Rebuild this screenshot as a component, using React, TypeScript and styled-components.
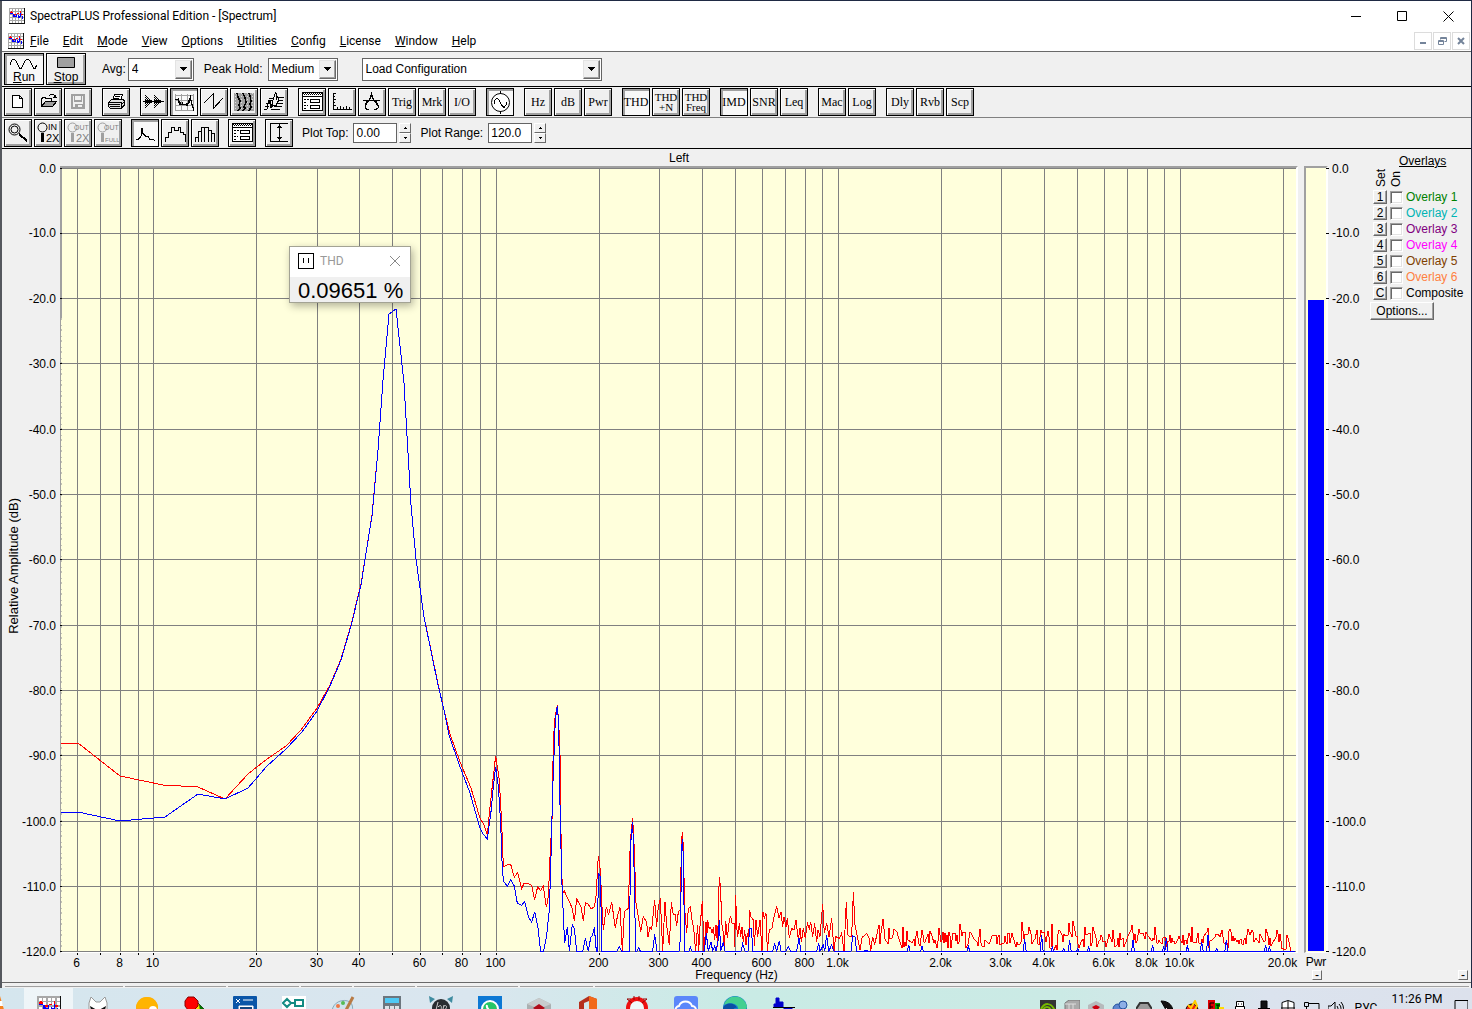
import React from "react";
import styled, { createGlobalStyle, css } from "styled-components";

const SANS = '"Liberation Sans", Arial, sans-serif';
const UI = 'Roboto, "Open Sans", sans-serif';
const SERIF = '"Liberation Serif", "Times New Roman", serif';

const GlobalStyle = createGlobalStyle`
  *, *::before, *::after { box-sizing: border-box; }
  body { margin: 0; background: #f0f0f0; font: 12px/14px ${SANS}; color: #000; }
  button, input, select { font: inherit; color: inherit; margin: 0; border-radius: 0; }
  button { padding: 0; }
  svg { display: block; flex: none; }
`;

/* ---------- window frame ---------- */

const Screen = styled.div`
  height: 100vh;
  display: flex;
  flex-direction: column;
  overflow: hidden;
`;

const AppWindow = styled.main`
  flex: 1;
  min-height: 0;
  display: flex;
  flex-direction: column;
  background: #f0f0f0;
  border: solid #1f2a44;
  border-width: 1px 1px 0 0;
  box-shadow: inset 2px 0 #55585e;
  padding-left: 2px;
`;

const TitleBar = styled.header`
  display: flex;
  align-items: center;
  height: 30px;
  padding-left: 7px;
  background: #fff;
  font: 12px/16px ${UI};
`;

const TitleText = styled.h1`
  flex: 1;
  margin: 0 0 0 5px;
  font: inherit;
`;

const CaptionButton = styled.button`
  display: grid;
  place-items: center;
  width: 46px;
  height: 29px;
  border: 0;
  background: transparent;
`;

const MenuBar = styled.nav`
  display: flex;
  align-items: center;
  height: 20px;
  padding-left: 6px;
  background: #fff;
  font: 12px/16px ${UI};
`;

const MenuList = styled.div`
  flex: 1;
  display: flex;
  gap: 14px;
  margin-left: 6px;
`;

const MenuItem = styled.button`
  border: 0;
  background: transparent;
  &::first-letter { text-decoration: underline; }
`;

const ChildButton = styled.button`
  display: grid;
  place-items: center;
  width: 18px;
  height: 18px;
  margin-right: 1px;
  border: 1px solid #dcdcdc;
  background: #fff;
`;

/* ---------- toolbars ---------- */

const ToolRow = styled.div<{ $height: number; $line: string }>`
  display: flex;
  align-items: center;
  height: ${(p) => p.$height}px;
  padding-left: 2px;
  border-top: 1px solid ${(p) => p.$line};
`;

const Group = styled.div<{ $end?: number }>`
  display: flex;
  gap: 2px;
  margin-right: ${(p) => p.$end ?? 10}px;
`;

const raised = css`
  background: #f0f0f0;
  box-shadow: inset 1px 1px #fff, inset -2px -2px #a0a0a0;
`;
const pressedFace = css`
  background: #f8f8f8;
  box-shadow: inset 2px 2px #a0a0a0;
`;

const ToolButton = styled.button<{ $pressed?: boolean; $small?: boolean }>`
  display: flex;
  flex-direction: column;
  align-items: center;
  justify-content: center;
  width: 28px;
  height: 28px;
  border: 1px solid #000;
  overflow: hidden;
  white-space: nowrap;
  font: ${(p) => (p.$small ? "11px/10px" : "12px/14px")} ${SERIF};
  ${(p) => (p.$pressed ? pressedFace : raised)}
  &:disabled { color: #a0a0a0; }
`;

const RunButton = styled(ToolButton)`
  justify-content: flex-end;
  width: 40px;
  height: 32px;
  font: 12px/14px ${SANS};
  span::first-letter { text-decoration: underline; }
`;

const FieldLabel = styled.label<{ $gap?: number }>`
  margin-right: ${(p) => p.$gap ?? 5}px;
`;

const Combo = styled.div<{ $width: number; $end: number }>`
  position: relative;
  width: ${(p) => p.$width}px;
  height: 23px;
  margin-right: ${(p) => p.$end}px;
  border: 1px solid #646464;
  background: #fff;
  select {
    width: 100%;
    height: 21px;
    padding: 0 18px 0 3px;
    border: 0;
    appearance: none;
    background: transparent;
  }
`;

const ComboArrow = styled.span`
  position: absolute;
  top: 1px;
  right: 1px;
  display: grid;
  place-items: center;
  width: 17px;
  height: 19px;
  border: 1px solid;
  border-color: #e3e3e3 #696969 #696969 #e3e3e3;
  background: #f0f0f0;
  box-shadow: inset -1px -1px #a0a0a0;
  pointer-events: none;
`;

const NumberBox = styled.input`
  width: 44px;
  height: 20px;
  margin-right: 2px;
  padding: 0 2px;
  border: 1px solid #646464;
  background: #fff;
`;

const Spinner = styled.div`
  display: grid;
  grid-template-rows: 10px 10px;
  width: 12px;
  margin-right: 9px;
`;

const SpinButton = styled.button`
  display: grid;
  place-items: center;
  border: 1px solid;
  border-color: #fff #696969 #696969 #fff;
  background: #f0f0f0;
`;

/* ---------- spectrum view ---------- */

const View = styled.section`
  flex: 1;
  min-height: 0;
  display: grid;
  grid-template-columns: 22px 36px minmax(0, 1fr) 6px 24px 40px 103px;
  grid-template-rows: 17px minmax(0, 1fr) 16px 13px;
  border-top: 1px solid #000;
`;

const PlotTitle = styled.h2`
  grid-area: 1 / 3;
  margin: 0;
  text-align: center;
  font: 12px/18px ${SANS};
`;

const AmplitudeTitle = styled.div`
  grid-area: 1 / 1 / 5 / 2;
  place-self: center;
  padding-right: 1px;
  writing-mode: vertical-lr;
  transform: rotate(180deg);
  white-space: nowrap;
  font-size: 13px;
`;

const AxisCell = styled.div<{ $column: number }>`
  grid-area: 2 / ${(p) => p.$column};
  padding: 2px 0 1px;
  min-height: 0;
  z-index: 1;
  svg { width: 100%; height: 100%; overflow: visible; }
`;

const FrequencyCell = styled.div`
  grid-area: 3 / 3;
  padding: 0 2px 0 1px;
  svg { width: 100%; height: 16px; overflow: visible; }
`;

const PlotBox = styled.div`
  grid-area: 2 / 3;
  position: relative;
  min-height: 0;
  border: solid;
  border-width: 2px 2px 1px 1px;
  border-color: #a0a0a0 #fff #fff #a0a0a0;
  background: #ffffdc;
  > svg { width: 100%; height: 100%; }
`;

const PowerBox = styled.div`
  grid-area: 2 / 5;
  display: flex;
  align-items: flex-end;
  padding: 0 2px 1px;
  border: solid;
  border-width: 2px 2px 1px 2px;
  border-color: #a0a0a0 #fff #fff #a0a0a0;
  background: #ffffdc;
`;

const PowerBar = styled.div`
  width: 100%;
  background: #0000ff;
`;

const PowerCaption = styled.div`
  grid-area: 3 / 5;
  justify-self: center;
  line-height: 19px;
`;

const BottomRow = styled.div`
  grid-area: 4 / 1 / 5 / -1;
  display: grid;
  grid-template-columns: 1fr auto 1fr;
  line-height: 12px;
`;

const CollapseGroup = styled.div`
  display: flex;
  justify-content: flex-end;
  gap: 136px;
  padding: 1px 3px 0 0;
`;

const CollapseButton = styled.button`
  width: 10px;
  height: 10px;
  border: 1px solid;
  border-color: #fff #696969 #696969 #fff;
  background: #f0f0f0;
  line-height: 7px;
`;

/* ---------- THD readout ---------- */

const Readout = styled.section`
  position: absolute;
  left: 228px;
  top: 78px;
  width: 122px;
  border: 1px solid #a3a394;
  background: #f0f0f0;
  box-shadow: 2px 3px 8px rgba(0, 0, 0, 0.3);
`;

const ReadoutBar = styled.header`
  display: flex;
  align-items: center;
  height: 30px;
  padding: 0 9px 2px 8px;
  gap: 6px;
  background: #fff;
  color: #999;
  font: 12px/16px ${UI};
  span { flex: 1; }
  button { border: 0; background: transparent; }
`;

const ReadoutValue = styled.output`
  display: block;
  padding: 2px 0 0 8px;
  font: 22px/23px ${SANS};
  white-space: nowrap;
`;

/* ---------- overlays ---------- */

const Overlays = styled.aside`
  grid-area: 1 / 7 / 3 / 8;
  padding: 5px 0 0 5px;
`;

const OverlaysTitle = styled.h2`
  margin: 0 0 0 26px;
  font: 12px/14px ${SANS};
  text-decoration: underline;
`;

const ColumnHeads = styled.div`
  display: flex;
  align-items: flex-end;
  gap: 1px;
  height: 20px;
  padding: 0 0 1px 1px;
  span { writing-mode: vertical-rl; transform: rotate(180deg); line-height: 14px; }
`;

const OverlayRow = styled.div<{ $color: string }>`
  display: grid;
  grid-template-columns: 14px 13px auto;
  justify-content: start;
  align-items: center;
  column-gap: 3px;
  height: 16px;
  label { color: ${(p) => p.$color}; line-height: 18px; white-space: nowrap; }
`;

const SetButton = styled.button`
  width: 14px;
  height: 14px;
  border: 1px solid;
  border-color: #fff #696969 #696969 #fff;
  background: #f0f0f0;
  box-shadow: inset -1px -1px #a0a0a0;
  line-height: 11px;
`;

const Tick = styled.input`
  appearance: none;
  width: 13px;
  height: 13px;
  border: 1px solid;
  border-color: #a0a0a0 #fff #fff #a0a0a0;
  background: #fff;
  box-shadow: inset 1px 1px #696969, inset -1px -1px #e3e3e3;
`;

const OptionsButton = styled.button`
  width: 64px;
  height: 18px;
  margin: 2px 0 0 -3px;
  border: 1px solid;
  border-color: #fff #696969 #696969 #fff;
  background: #f0f0f0;
  box-shadow: inset -1px -1px #a0a0a0;
`;

/* ---------- status bar and task bar ---------- */

const StatusBar = styled.footer`
  display: flex;
  gap: 2px;
  height: 6px;
  padding: 3px 2px 0 3px;
  border-top: 1px solid #696969;
`;

const StatusPane = styled.div<{ $width?: number }>`
  flex: ${(p) => (p.$width ? `0 0 ${p.$width}px` : "1")};
  height: 1px;
  background: #a0a0a0;
`;

const TaskBar = styled.nav`
  flex: 0 0 21px;
  overflow: hidden;
  background: linear-gradient(90deg, #d5e6ee 0%, #dae6ef 32%, #c9ebe5 50%, #cbeae5 72%, #dbe3ee 86%, #dce1ec 100%);
`;

const TaskBarInner = styled.div`
  display: flex;
  align-items: center;
  height: 40px;
`;

const TaskButton = styled.button<{ $active?: boolean; $width?: number }>`
  display: grid;
  place-items: center;
  flex: 0 0 ${(p) => p.$width ?? 49}px;
  height: 40px;
  border: 0;
  background: ${(p) => (p.$active ? "rgba(255,255,255,0.6)" : "transparent")};
  font: 12px/16px ${UI};
`;

const Tray = styled.div`
  display: flex;
  align-items: center;
  margin-left: auto;
`;

const Clock = styled.time`
  align-self: flex-start;
  width: 64px;
  padding: 3px 0 0 2px;
  text-align: center;
  font: 12px/16px ${UI};
`;

/* ---------- small drawings ---------- */

type Kids = { children: React.ReactNode };

/** Line drawing laid over the whole 28px face of a tool button. */
const Face = ({ children, color = "#000" }: Kids & { color?: string }) => (
  <svg width="28" height="28" viewBox="0 0 28 28" fill="none" stroke={color} shapeRendering="crispEdges" aria-hidden>
    {children}
  </svg>
);

const AppIcon = ({ size = 16 }: { size?: number }) => (
  <svg width={size} height={size} viewBox="0 0 16 16" fill="none" shapeRendering="crispEdges" aria-hidden>
    <rect width="16" height="16" fill="#fff" />
    <path d="M.5 0v15M3.5 0v15M6.5 0v15M9.5 0v15M12.5 0v15M0 .5h15M0 3.5h15M0 6.5h15M0 9.5h15M0 12.5h15" stroke="#a8a8a8" />
    <path d="M0 15.5h16M15.5 0v16" stroke="#111" />
    <path d="M1 4.500h3M5 6.500h2M8 5.500h2M11.500 3v3M12 6.500h2M2 3.500h1" stroke="#f00" />
    <path d="M1 5.500h3M4.500 6v3M6 8.500h2M7.500 6v3M9.500 7v3M11.500 5v4M13.500 8v3M10.500 8v2M5.500 7v2" stroke="#00f" />
  </svg>
);

const Down = () => (
  <svg width="7" height="4" viewBox="0 0 7 4" shapeRendering="crispEdges" aria-hidden>
    <path d="M0 0h7v1H6v1H5v1H4v1H3V3H2V2H1V1H0z" />
  </svg>
);

const SpinArrow = ({ up }: { up?: boolean }) => (
  <svg width="3" height="2" viewBox="0 0 3 2" shapeRendering="crispEdges" aria-hidden>
    <path d={up ? "M1 0h1v1h1v1H0V1h1z" : "M0 0h3v1H2v1H1V1H0z"} />
  </svg>
);

const icons = {
  file: <Face><path d="M8.5 7.5h7l3 3v9h-10zM15.5 7.5v3h3" fill="#fff" /></Face>,
  open: (
    <Face>
      <path d="M7.5 18.5v-8h1v-1h3v1h6v3" /><path d="M7.5 18.5l4-5h11l-4 5z" fill="#a0a0a0" />
      <path d="M14.5 8.5l2-2h3l2 3M19 9.5h4M21.5 7v3" />
    </Face>
  ),
  save: (
    <Face color="#a0a0a0">
      <path d="M8 7h12v13H8z" strokeWidth="2" /><path d="M10.5 7v6h7V7M10 12.5h8M11 16.500h7v4h-7z" /><path d="M13 17v3" strokeWidth="2" />
    </Face>
  ),
  print: (
    <Face>
      <path d="M10.5 12.5l2-6h8l-2 6" fill="#fff" /><path d="M13 8.5h5M12 10.5h5" />
      <path d="M6.5 14.5l3-3h11l2 1v5l-4 3h-10l-2-2z" fill="#ddd" />
      <path d="M7 14.5h12v5M7 16.5h11M8 18.5h10M19 17l3-3" /><path d="M10 20.500h9l3-3" />
    </Face>
  ),
  time: (
    <Face>
      <path d="M3 13.500h21" />
      <path d="M5.500 7v1M5.500 9v1M5.500 11v5M5.500 17v1M5.500 19v1M7.500 9v1M7.500 11v5M7.500 17v1M9.500 11v5M11.500 12v3M6.500 8v1M6.500 10v1M6.500 12v3M6.500 16v1M6.500 18v1M8.500 10v1M8.500 12v3M8.500 16v1M10.500 12v3" />
      <path d="M14.500 7v1M14.500 9v1M14.500 11v5M14.500 17v1M14.500 19v1M16.500 9v1M16.500 11v5M16.500 17v1M18.500 11v5M20.500 12v3M15.500 8v1M15.500 10v1M15.500 12v3M15.500 16v1M15.500 18v1M17.500 10v1M17.500 12v3M17.500 16v1M19.500 12v3" />
    </Face>
  ),
  spectrum: (
    <Face>
      <path d="M5.5 6v17M11.5 6v17M17.5 6v17M23.5 6v17M5 7.5h19M5 12.5h19M5 17.5h19M5 22.5h19" stroke="#a0a0a0" />
      <path d="M5 11.500h3M8.500 10v5M9.500 13v4M10 16.500h2M12.500 14v3M13 16.500h4M17.500 15v3M18.500 12v4M20.500 7v6M19.500 10v5M21.500 12v5M22.500 16v4M23.500 19v4M10.500 14v2M16.500 15v3" />
    </Face>
  ),
  phase: <Face><path d="M4 15l9-9v15l10-11" /></Face>,
  spectrogram: (
    <Face>
      <rect x="4" y="5" width="20" height="18" fill="#a0a0a0" stroke="none" />
      <path d="M5.5 5v18M11.5 5v18M17.5 5v18M22.5 5v18" stroke="#ddd" strokeDasharray="1 2" />
      <path d="M7 5l1 4 2 4-1 4 1 3-2 3M13 5l2 5 1 4-2 5 1 1-2 3M19 5l1 3 1 5-1 3 1 3-2 4" strokeWidth="1.5" />
    </Face>
  ),
  surface: (
    <Face>
      <path d="M9 10.500h5M18 9.500h6M8 12.500h5M18 12.500h5M6 15.500h5M17 15.500h6M5 18.500h4M14 18.500h8M4 21.500h3M11 21.500h9" />
      <path d="M7 20.500v-4l2-3 2 3v3M12.500 19v-6l3-8 2 4h2M12 17.500h4l2-4v-4" />
      <path d="M16.500 5v7M10.500 13v7" />
    </Face>
  ),
  settings: (
    <Face>
      <path d="M4.5 4.5h20v18h-20z" fill="#fff" /><path d="M5 5.500h19M6 6.500h18" strokeDasharray="1 1" /><path d="M5 8.5h19" />
      <path d="M12.5 11.5h9v3h-9zM12.5 17.5h9v3h-9z" /><path d="M6 11.5h5M6 14.5h3M6 17.5h4M6 20.5h3" strokeDasharray="2 1" />
    </Face>
  ),
  ruler: <Face><path d="M5.5 5v16.500h18M5 5.500h3M5 8.500h2M5 11.500h3M5 14.500h2M5 17.500h3M9.500 21v-2M12.500 21v-3M15.500 21v-2M18.500 21v-3M21.500 21v-2" /></Face>,
  compass: (
    <Face>
      <path d="M13.500 4v3M12 8.500h3M12 7.500h3M13 9l-6 9M14 9l6 9M5 12.500h17M9 13l-2 4v3l3 2 1-1M18 13l2 4v3l-3 2-1-1" />
    </Face>
  ),
  generator: (
    <Face>
      <circle cx="14.500" cy="14.500" r="9" fill="#fff" shapeRendering="auto" /><path d="M14.500 3v3M14.500 23v3M8.500 16v-3l2-3h1l2 3 2 4 2 2h1l2-3v-2" />
    </Face>
  ),
  zoom: (
    <Face>
      <circle cx="10.500" cy="10.500" r="5.500" shapeRendering="auto" /><circle cx="10.500" cy="10.500" r="3.500" shapeRendering="auto" />
      <path d="M15 15l8 7" strokeWidth="2" />
    </Face>
  ),
  vertical: (
    <Face><path d="M5.500 4v19M5 4.500h18M5 22.500h18M14.500 5v17M12 8.500h5M13 7.500h3M12 18.500h5M13 19.500h3" /></Face>
  ),
  line: <Face><path d="M5 20.500h2l3-3 1-8 1 5 3 3h2l2 3h3l2 1" /></Face>,
  outline: <Face><path d="M4.500 23v-5h3v-5h3V8h3v3h4v-3h2v5h3v2h2v8" /></Face>,
  bars: <Face><path d="M4.500 23v-5h3v5M7.500 19v-7h3v11M10.500 13V8h3v15M13.500 8h4v15M17.500 11h3v12M20.500 14h3v9" /></Face>,
};

const ZoomText = ({ top, bottom, off }: { top: string; bottom: string; off?: boolean }) => (
  <Face color={off ? "#a0a0a0" : "#000"}>
    <circle cx="8.500" cy="8.500" r="4.500" shapeRendering="auto" />
    <path d="M8.500 14v9" strokeWidth="3" />
    <g fill={off ? "#808080" : "#000"} stroke="none" fontFamily='"Liberation Sans", Arial, sans-serif'>
      <text x={top === "IN" ? 14 : 10} y="11" fontSize={top === "IN" ? 9 : 7}>{top}</text>
      <text x={bottom === "2X" ? 12 : 11} y="23" fontSize={bottom === "2X" ? 11 : 6}>{bottom}</text>
    </g>
  </Face>
);

/* ---------- measured data ---------- */

const PLOT_W = 1235;
const PLOT_H = 784;
const freqX = (hz: number) => Math.floor(92.7 + 342.3 * Math.log10(hz / 10)) + 0.5;
const levelY = (i: number) => Math.floor(i * 65.3) + 0.5;

const gridFrequencies = [
  6, 7, 8, 9, 10, 20, 30, 40, 50, 60, 70, 80, 90, 100, 200, 300, 400, 500, 600, 700, 800, 900, 1000,
  2000, 3000, 4000, 5000, 6000, 7000, 8000, 9000, 10000, 20000,
];
const frequencyLabels: [number, string][] = [
  [6, "6"], [8, "8"], [10, "10"], [20, "20"], [30, "30"], [40, "40"], [60, "60"], [80, "80"], [100, "100"],
  [200, "200"], [300, "300"], [400, "400"], [600, "600"], [800, "800"], [1000, "1.0k"], [2000, "2.0k"],
  [3000, "3.0k"], [4000, "4.0k"], [6000, "6.0k"], [8000, "8.0k"], [10000, "10.0k"], [20000, "20.0k"],
];
const levels = Array.from({ length: 13 }, (_, i) => (i === 0 ? "0.0" : `-${i * 10}.0`));

/* Low bins, in plot units. */
const redLow =
  "0,575 17,575 59,608 102,617 137,619 164,631 187,606 206,591 225,578 240,562 256,540 269,517 280,491 290,457 300,416 305,385 311,347 317,282 322,212 328,146 335,141 343,215 350,337 355,391 363,449 370,482 377,516 383,542 389,566 399,594 410,620";
const blueLow =
  "0,644 17,644 59,653 104,649 137,626 164,631 187,620 206,598 225,581 241,564 256,543 269,518 280,492 290,458 300,417 305,385 311,348 317,282 322,212 328,146 335,141 343,215 350,337 355,391 363,449 370,483 377,517 383,542 388,567 398,596 409,625";

/* Upper bins, three units to one plot unit, measured from the 419/522 corner. */
const redMid = [
  0,385,10,400,22,435,30,350,40,260,47,197,58,270,65,400,70,530,80,525,92,523,103,562,113,547,125,595,132,580,145,580,155,587,164,630,173,590,182,602,190,588,199,652,205,620,211,480,216,390,220,160,224,90,232,45,236,95,240,190,243,430,247,610,253,603,270,640,277,655,283,693,290,627,303,650,310,693,316,638,325,643,333,657,343,650,348,620,355,497,361,540,366,650,370,720,379,650,386,675,395,635,406,715,412,680,420,652,427,783,433,665,445,655,451,450,458,385,463,480,468,640,475,680,482,725,490,680,500,697,504,740,510,712,515,718,524,630,530,710,535,650,541,625,548,783,555,635,560,705,568,765,574,637,580,675,585,672,590,708,595,665,601,660,604,470,607,425,610,470,614,655,620,730,625,655,631,650,636,690,641,715,647,783,653,705,656,783,660,710,667,633,672,783,678,697,681,730,683,690,687,715,692,712,696,730,700,712,704,750,708,705,713,770,715,650,718,560,722,600,725,700,730,730,733,783,737,692,742,745,748,690,752,680,756,700,762,700,764,770,767,615,770,710,773,740,778,700,782,740,786,710,790,757,794,720,798,765,802,730,806,750,809,660,813,680,820,690,823,767,828,690,833,740,840,690,846,783,849,665,853,685,858,670,862,783,868,720,876,715,880,690,890,648,897,685,903,665,908,710,912,680,918,712,922,685,928,745,935,715,942,720,948,690,955,750,960,715,964,757,970,715,976,745,982,700,988,715,992,695,998,740,1004,700,1010,755,1014,720,1020,740,1028,643,1033,730,1040,700,1047,740,1055,685,1062,783,1067,740,1078,745,1085,730,1092,783,1099,635,1103,735,1110,740,1115,740,1120,607,1125,705,1132,740,1140,780,1147,740,1153,738,1160,730,1168,745,1172,783,1178,740,1184,765,1195,712,
];
const blueMid = [
  0,415,10,433,22,447,33,365,40,290,47,230,55,290,62,400,67,540,71,575,82,588,92,570,103,588,112,640,125,646,134,635,145,680,155,697,164,665,174,715,182,784,191,784,200,735,208,660,212,540,218,300,223,170,226,90,232,47,236,100,239,300,245,560,251,700,254,760,262,710,268,784,277,703,283,715,290,784,308,784,316,745,325,784,332,743,338,735,343,712,349,784,352,784,355,550,361,560,366,784,411,784,418,770,425,784,448,784,452,460,458,395,462,530,467,784,470,784,476,772,481,784,518,784,524,733,531,784,597,784,602,740,604,490,607,448,610,500,614,784,627,784,631,772,636,784,673,784,679,730,685,784,693,755,698,784,704,768,708,784,714,755,718,690,722,784,730,755,735,784,783,784,788,762,795,784,804,784,809,715,814,715,819,784,878,784,884,762,890,784,898,752,903,784,918,784,925,770,932,784,950,784,957,745,963,784,1010,784,1016,760,1020,784,1030,765,1034,784,1040,735,1046,784,1055,765,1062,784,1113,784,1118,738,1125,740,1130,784,1150,784,1158,780,1166,784,
];
const unpack = (values: number[]) => {
  let out = "";
  for (let i = 0; i < values.length; i += 2) out += ` ${419 + values[i] / 3},${522 + values[i + 1] / 3}`;
  return out;
};

/* Noise floor above 1.3 kHz with its stronger components. */
const redSpikes: Record<number, number> = {
  818: 757, 822: 751, 828: 760, 833: 761, 842: 759, 878: 760, 899: 756, 919: 761, 961: 754, 968: 759, 980: 762,
  991: 756, 1008: 755, 1012: 753, 1024: 759, 1032: 759, 1071: 757, 1131: 759, 1147: 760, 1161: 762, 1187: 761,
  1205: 761, 1216: 762,
};
const noiseFloor = () => {
  let seed = 4711;
  const random = () => {
    seed = (seed * 1103515245 + 12345) % 2147483648;
    return seed / 2147483648;
  };
  let out = "";
  let drift = 0;
  for (let x = 818; x <= 1228; x++) {
    drift = drift * 0.6 + (random() - 0.5) * 6;
    const spread = x < 910 ? 20 : 16;
    const y = redSpikes[x] ?? Math.min(782, 771 + drift + (random() - 0.5) * spread + (x > 1220 ? 5 : 0));
    if (redSpikes[x] || random() > 0.3) out += ` ${x},${Math.round(y)}`;
  }
  return out + " 1230,783";
};
const blueSpikes = [
  18,270,146,255,186,258,325,258,494,237,545,225,577,262,611,265,629,240,653,265,686,262,819,240,878,258,911,262,919,235,982,258,1025,245,1044,225,1070,265,1099,240,1217,258,1228,262,
];
const blueFloor = () => {
  let out = "";
  for (let i = 0; i < blueSpikes.length; i += 2) {
    const x = 799 + blueSpikes[i] / 3;
    out += ` ${x - 1.5},783.4 ${x},${692 + blueSpikes[i + 1] / 3} ${x + 1.5},783.4`;
  }
  return out + " 1234,783.4";
};

const redTrace = redLow + unpack(redMid) + noiseFloor();
const blueTrace = blueLow + unpack(blueMid) + blueFloor();

/* ---------- parts ---------- */

const SpectrumPlot = () => (
  <svg viewBox={`0 0 ${PLOT_W} ${PLOT_H}`} preserveAspectRatio="none" fill="none" shapeRendering="crispEdges" role="img" aria-label="Spectrum, left channel">
    <g stroke="#808080">
      {gridFrequencies.map((f) => <path key={f} d={`M${freqX(f)} 0V${PLOT_H}`} />)}
      {levels.map((l, i) => <path key={l} d={`M0 ${levelY(i)}H${PLOT_W}`} />)}
    </g>
    <path d="M.5 0V150" stroke="#a0a0a0" />
    <path d="M.5 150V784" stroke="#c4c4b4" strokeDasharray="2 5 1 3" />
    <polyline points={redTrace} stroke="#f00" />
    <polyline points={blueTrace} stroke="#00f" />
    <path d={`M${freqX(3000)} 783.5H1234`} stroke="#00f" />
  </svg>
);

const LevelAxis = ({ side }: { side: "left" | "right" }) => (
  <svg aria-hidden fontSize="12">
    {levels.map((l, i) => {
      const y = `${(levelY(i) / PLOT_H) * 100}%`;
      return (
        <g key={l}>
          <line x1={side === "left" ? 36 : -2} x2={side === "left" ? 38 : 1} y1={y} y2={y} stroke="#000" shapeRendering="crispEdges" />
          <text x={side === "left" ? 32 : 4} y={y} dy="4" textAnchor={side === "left" ? "end" : "start"}>{l}</text>
        </g>
      );
    })}
  </svg>
);

const FrequencyAxis = () => (
  <svg fontSize="12" aria-hidden>
    {gridFrequencies.map((f) => {
      const x = `${(freqX(f) / PLOT_W) * 100}%`;
      return <line key={f} x1={x} x2={x} y1="-1" y2="2" stroke="#000" shapeRendering="crispEdges" />;
    })}
    {frequencyLabels.map(([f, text]) => (
      <text key={f} x={`${(freqX(f) / PLOT_W) * 100}%`} dx="-1" y="14" textAnchor="middle">{text}</text>
    ))}
  </svg>
);

const Select = ({ id, width, end, value }: { id: string; width: number; end: number; value: string }) => (
  <Combo $width={width} $end={end}>
    <select id={id} defaultValue={value} aria-label={id === "configuration" ? "Configuration" : undefined}>
      <option>{value}</option>
    </select>
    <ComboArrow><Down /></ComboArrow>
  </Combo>
);

const Stepper = ({ name }: { name: string }) => (
  <Spinner>
    <SpinButton aria-label={`Increase ${name}`}><SpinArrow up /></SpinButton>
    <SpinButton aria-label={`Decrease ${name}`}><SpinArrow /></SpinButton>
  </Spinner>
);

type Tool = { icon?: keyof typeof icons; text?: string; name?: string; on?: boolean; off?: boolean };
const mainTools: Tool[][] = [
  [{ icon: "file", name: "New" }, { icon: "open", name: "Open" }, { icon: "save", name: "Save", off: true }],
  [{ icon: "print", name: "Print" }],
  [{ icon: "time", name: "Time series" }, { icon: "spectrum", name: "Spectrum", on: true }, { icon: "phase", name: "Phase" }, { icon: "spectrogram", name: "Spectrogram" }, { icon: "surface", name: "3-D surface" }],
  [{ icon: "settings", name: "Settings" }, { icon: "ruler", name: "Scaling" }, { icon: "compass", name: "Calibration" }, { text: "Trig" }, { text: "Mrk" }, { text: "I/O" }],
  [{ icon: "generator", name: "Signal generator", on: true }],
  [{ text: "Hz" }, { text: "dB" }, { text: "Pwr" }],
  [{ text: "THD", on: true }, { text: "THD +N" }, { text: "THD Freq" }],
  [{ text: "IMD", on: true }, { text: "SNR" }, { text: "Leq" }],
  [{ text: "Mac" }, { text: "Log" }],
  [{ text: "Dly" }, { text: "Rvb" }, { text: "Scp" }],
];

const ToolItem = ({ tool }: { tool: Tool }) => {
  const lines = tool.text?.split(" ") ?? [];
  return (
    <ToolButton $pressed={tool.on} $small={lines.length > 1} disabled={tool.off} aria-label={tool.name} aria-pressed={tool.on}>
      {tool.icon ? icons[tool.icon] : lines.map((l) => <span key={l}>{l}</span>)}
    </ToolButton>
  );
};

const overlays: [string, string, string][] = [
  ["1", "Overlay 1", "#008000"], ["2", "Overlay 2", "#00b4b4"], ["3", "Overlay 3", "#800080"], ["4", "Overlay 4", "#ff00ff"],
  ["5", "Overlay 5", "#804000"], ["6", "Overlay 6", "#ff8040"], ["C", "Composite", "#000"],
];

const Task = ({ children }: Kids) => <svg width="24" height="24" viewBox="0 0 24 24" aria-hidden>{children}</svg>;
const tasks: [string, React.ReactNode][] = [
  ["Spectrum analyser", <AppIcon size={24} />],
  ["Foobar", <Task><path d="M3 24V7l2-6 5 5h4l5-5 2 6v17z" fill="#fff" stroke="#999" /><path d="M4 10l7 4v5l-5-1zM20 10l-7 4v5l5-1z" fill="#111" /></Task>],
  ["Mail", <Task><circle cx="12" cy="12" r="11" fill="#ffa51a" /><path d="M1 12a11 11 0 0 1 22 0z" fill="#ffb400" /><circle cx="18" cy="14" r="4" fill="#fff" /></Task>],
  ["Shapes", <Task><path d="M11 4l10 10v8H9z" fill="#fd0" stroke="#333" /><path d="M15 8l6 6v8h-4z" fill="#070" /><path d="M4 1h6l4 4v5l-4 4H4L1 10V5z" fill="#f00" stroke="#800" /></Task>],
  ["Calculator pro", <Task><rect width="24" height="24" rx="1" fill="#0b56a8" /><path d="M3 3l4 4M7 3l-4 4" stroke="#fff" /><path d="M10 4h10M6 10h14v13H6z" fill="#fff" stroke="#fff" /><path d="M7 11h12v3H7z" fill="#124580" /></Task>],
  ["Circuit", <Task><rect width="24" height="24" fill="#fff" /><path d="M1 7l4-4 4 4-4 4zM9 7h4M13 4h8v6h-8zM4 16h8v6H4zM12 19h10" fill="none" stroke="#138b83" strokeWidth="2" /></Task>],
  ["Paint", <Task><path d="M1 15C2 6 12 2 19 6c5 4 3 15-7 17C5 24 1 21 1 15z" fill="#cfe3ee" stroke="#8ab" /><circle cx="7" cy="10" r="2" fill="#e74" /><circle cx="12" cy="7" r="2" fill="#5b5" /><circle cx="5" cy="15" r="2" fill="#48e" /><path d="M22 1l-8 15" stroke="#b87b45" strokeWidth="3" /></Task>],
  ["Calculator", <Task><rect x="3" width="18" height="24" fill="#6c767e" /><rect x="5" y="2" width="14" height="5" fill="#4fc9f4" /><path d="M5 10h4v4H5zM10 10h4v4h-4zM15 10h4v4h-4z" fill="#dce3e8" /></Task>],
  ["Printer assistant", <Task><circle cx="12" cy="12" r="9" fill="#292c30" /><path d="M0 0l6 3-5 4zM24 0l-6 3 5 4z" fill="#3f8ca0" /><path d="M9 6l-2 8M9 11c3-3 4-1 3 3M15 9l-2 8M15 10c4-2 3 4-1 4" stroke="#ccc" fill="none" /></Task>],
  ["WhatsApp", <Task><rect width="24" height="24" fill="#0c78d4" /><circle cx="12" cy="13" r="8" fill="#25c667" stroke="#fff" strokeWidth="2" /><path d="M9 9c-1 3 3 7 6 6" stroke="#fff" strokeWidth="2" fill="none" /></Task>],
  ["Cube", <Task><path d="M0 8l12-6 12 6v10l-12 5-12-5z" fill="#aab0b2" /><path d="M0 8l12-6 12 6-12 5z" fill="#c8cccd" /><path d="M6 12l6-4 6 4-6 4z" fill="#b00b18" /></Task>],
  ["Office", <Task><path d="M3 6l10-6 8 3v18l-8 3-10-4 10 1V5L8 7v11l-5 2z" fill="#b5301c" /><path d="M13 0l8 3v18l-8 3z" fill="#f26a1b" /></Task>],
  ["Ring", <Task><circle cx="12" cy="12" r="9" fill="#eefafa" stroke="#e11" strokeWidth="4" /><path d="M2 3l5 4M22 3l-5 4M9 0v4M14 0v4M2 3h4M18 3h4" stroke="#900" /></Task>],
  ["Cloud", <Task><rect width="24" height="24" rx="3" fill="#5b87fa" /><path d="M6 18a4 4 0 0 1-1-8 7 7 0 0 1 13 0 4 4 0 0 1 0 8" fill="none" stroke="#fff" strokeWidth="2" /></Task>],
  ["Edge", <Task><circle cx="12" cy="12" r="12" fill="#1680cf" /><path d="M1 9C4-2 20-3 24 10c0 5-8 7-9 3 1-5-8-8-14-4z" fill="#43cf90" /><path d="M0 12c2-6 12-6 14 0-4-1-6 4-3 8C5 20 0 18 0 12z" fill="#0c4fa5" /></Task>],
  ["Histogram", <Task><path d="M2 11V8h2V2h3v4h4v5zM12 12v3h8v-3" fill="#00c" stroke="#00c" /><path d="M1 11.500h22" stroke="#000" /></Task>],
];

const Mini = ({ children }: Kids) => <svg width="16" height="16" viewBox="0 0 16 16" fill="none" stroke="#000" aria-hidden>{children}</svg>;
const tray: [string, React.ReactNode][] = [
  ["Graphics", <Mini><rect width="16" height="16" fill="#333" stroke="none" /><path d="M1 9c4-7 10-6 13 0-4 5-8 5-11 1 2-4 6-4 8 0" stroke="#76b900" strokeWidth="2" /></Mini>],
  ["Storage", <Mini><path d="M1 3l4-3h11v14l-4 2H1z" fill="#aaa" stroke="#777" /><path d="M5 4v12M9 4v12M1 4h11" stroke="#ddd" /></Mini>],
  ["Cube agent", <Mini><path d="M0 5l8-4 8 4v8l-8 3-8-3z" fill="#b6babc" stroke="none" /><path d="M4 7l4-2 4 2-4 4z" fill="#c01" stroke="none" /></Mini>],
  ["Sync", <Mini><circle cx="6" cy="9" r="5" fill="#5f86cf" stroke="#24529e" /><circle cx="11" cy="5" r="4" fill="#8dafe6" stroke="#24529e" /></Mini>],
  ["Security", <Mini><path d="M0 9l4-6h8l4 6-3 7H3z" fill="#9a9a9a" stroke="#333" strokeWidth="2" /></Mini>],
  ["Feather", <Mini><path d="M1 1c8 0 13 5 12 14C9 14 6 12 5 8L1 1z" fill="#111" /><path d="M6 8l5 6" stroke="#fff" /></Mini>],
  ["Firewall", <Mini><circle cx="8" cy="10" r="6" fill="#e21" /><path d="M4 5l3 3 4-7 2 5-3 5 3 4" stroke="#fc0" strokeWidth="2" /></Mini>],
  ["Monitor", <Mini><path d="M0 0h7v14H0z" fill="#d00" stroke="none" /><path d="M7 3h5v11H7z" fill="#0a0" stroke="none" /><path d="M11 7h5v7h-5z" fill="#fd0" stroke="none" /><path d="M2 3h4M2 3v8M2 7h3M8 5h4M10 5v6" /></Mini>],
  ["USB", <Mini><path d="M4.500 1.500h7v5h-7zM3.500 6.500h9v9h-9z" fill="#fff" /><path d="M6 4h1M9 4h1" /></Mini>],
  ["Microphone", <Mini><path d="M5 1h6v8H5z" fill="#111" /><path d="M2 9h12M8 9v6" strokeWidth="2" /></Mini>],
  ["Defender", <Mini><path d="M8 .5l6 2v6c0 4-3 6-6 7-3-1-6-3-6-7v-6z" fill="#fff" /><path d="M8 1v14M1 8h14" /></Mini>],
  ["Network", <Mini><path d="M.5 2.500h4v4h-4zM4 3.500h11v9H5M2.500 6v8M7 15h6" /></Mini>],
  ["Volume", <Mini><path d="M0 6h3l4-4v12l-4-4H0zM9 6q2 2 0 5M11 4q4 4 0 9M13 2q5 6 0 13" /></Mini>],
];

export default function App() {
  return (
    <Screen>
      <GlobalStyle />
      <AppWindow>
        <TitleBar>
          <AppIcon />
          <TitleText>SpectraPLUS Professional Edition - [Spectrum]</TitleText>
          <CaptionButton aria-label="Minimize"><svg width="10" height="10"><path d="M0 5.500h10" stroke="#000" /></svg></CaptionButton>
          <CaptionButton aria-label="Maximize"><svg width="10" height="10"><path d="M.5.500h9v9h-9z" fill="none" stroke="#000" /></svg></CaptionButton>
          <CaptionButton aria-label="Close"><svg width="11" height="11"><path d="M.5.500l10 10M10.500.500l-10 10" stroke="#000" /></svg></CaptionButton>
        </TitleBar>
        <MenuBar aria-label="Menu">
          <AppIcon />
          <MenuList>
            {["File", "Edit", "Mode", "View", "Options", "Utilities", "Config", "License", "Window", "Help"].map((m) => (
              <MenuItem key={m}>{m}</MenuItem>
            ))}
          </MenuList>
          <ChildButton aria-label="Minimize child"><svg width="8" height="8"><path d="M1 6h6" stroke="#74849a" strokeWidth="2" /></svg></ChildButton>
          <ChildButton aria-label="Restore child"><svg width="9" height="9" fill="none" stroke="#74849a"><path d="M2.500 2.500v-2h6v4h-2M.5 3.500h5v4h-5zM.5 4.500h5M3 1.500h5" /></svg></ChildButton>
          <ChildButton aria-label="Close child"><svg width="8" height="8"><path d="M1 1l6 6M7 1l-6 6" stroke="#74849a" strokeWidth="2" /></svg></ChildButton>
        </MenuBar>

        <ToolRow $height={35} $line="#696969">
          <Group $end={16}>
            <RunButton $pressed>
              <svg width="30" height="13" viewBox="0 0 30 13" fill="none" stroke="#000" shapeRendering="crispEdges"><path d="M1.500 8v-2l2-4h2l2 3 3 6h2l3-6 2-3h2l2 3 3 6h2l1-3" /></svg>
              <span>Run</span>
            </RunButton>
            <RunButton>
              <svg width="18" height="13" viewBox="0 0 18 13"><path d="M.5.500h17v10H.5z" fill="#a0a0a0" stroke="#000" /></svg>
              <span>Stop</span>
            </RunButton>
          </Group>
          <FieldLabel htmlFor="avg" $gap={2}>Avg:</FieldLabel>
          <Select id="avg" width={66} end={10} value="4" />
          <FieldLabel htmlFor="hold">Peak Hold:</FieldLabel>
          <Select id="hold" width={70} end={24} value="Medium" />
          <Select id="configuration" width={240} end={0} value="Load Configuration" />
        </ToolRow>

        <ToolRow $height={31} $line="#000">
          {mainTools.map((group, i) => (
            <Group key={i}>{group.map((tool, j) => <ToolItem key={j} tool={tool} />)}</Group>
          ))}
        </ToolRow>

        <ToolRow $height={31} $line="#808080">
          <Group $end={9}>
            <ToolButton aria-label="Zoom">{icons.zoom}</ToolButton>
            <ToolButton aria-label="Zoom in 2X"><ZoomText top="IN" bottom="2X" /></ToolButton>
            <ToolButton aria-label="Zoom out 2X" disabled><ZoomText top="OUT" bottom="2X" off /></ToolButton>
            <ToolButton aria-label="Zoom out full" disabled><ZoomText top="OUT" bottom="FULL" off /></ToolButton>
          </Group>
          <Group $end={9}>
            <ToolButton $pressed aria-label="Line plot">{icons.line}</ToolButton>
            <ToolButton aria-label="Outline plot">{icons.outline}</ToolButton>
            <ToolButton aria-label="Bar plot">{icons.bars}</ToolButton>
          </Group>
          <Group $end={9}><ToolButton aria-label="Plot options">{icons.settings}</ToolButton></Group>
          <Group $end={9}><ToolButton aria-label="Auto scale">{icons.vertical}</ToolButton></Group>
          <FieldLabel htmlFor="top">Plot Top:</FieldLabel>
          <NumberBox id="top" defaultValue="0.00" />
          <Stepper name="plot top" />
          <FieldLabel htmlFor="range">Plot Range:</FieldLabel>
          <NumberBox id="range" defaultValue="120.0" />
          <Stepper name="plot range" />
        </ToolRow>

        <View>
          <PlotTitle>Left</PlotTitle>
          <AmplitudeTitle>Relative Amplitude (dB)</AmplitudeTitle>
          <AxisCell $column={2}><LevelAxis side="left" /></AxisCell>
          <PlotBox>
            <SpectrumPlot />
            <Readout aria-label="THD">
              <ReadoutBar>
                <svg width="16" height="16" fill="none" stroke="#000" shapeRendering="crispEdges"><path d="M.5.500h15v15H.5zM5.500 5v5M10.500 5v5" /></svg>
                <span>THD</span>
                <button aria-label="Close THD"><svg width="12" height="12"><path d="M1 1l10 10M11 1L1 11" stroke="#888" /></svg></button>
              </ReadoutBar>
              <ReadoutValue>0.09651 %</ReadoutValue>
            </Readout>
          </PlotBox>
          <FrequencyCell><FrequencyAxis /></FrequencyCell>
          <PowerBox><PowerBar style={{ height: "83.200%" }} /></PowerBox>
          <AxisCell $column={6}><LevelAxis side="right" /></AxisCell>
          <PowerCaption>Pwr</PowerCaption>
          <Overlays>
            <OverlaysTitle>Overlays</OverlaysTitle>
            <ColumnHeads><span>Set</span><span>On</span></ColumnHeads>
            {overlays.map(([key, name, color]) => (
              <OverlayRow key={key} $color={color}>
                <SetButton aria-label={`Set ${name}`}>{key}</SetButton>
                <Tick type="checkbox" id={`overlay-${key}`} />
                <label htmlFor={`overlay-${key}`}>{name}</label>
              </OverlayRow>
            ))}
            <OptionsButton>Options...</OptionsButton>
          </Overlays>
          <BottomRow>
            <span />
            <span>Frequency (Hz)</span>
            <CollapseGroup>
              <CollapseButton aria-label="Hide power meter">-</CollapseButton>
              <CollapseButton aria-label="Hide overlays">-</CollapseButton>
            </CollapseGroup>
          </BottomRow>
        </View>

        <StatusBar>
          {[118, 101, 71, 51, 61, 101, 73].map((w, i) => <StatusPane key={i} $width={w} />)}
          <StatusPane />
        </StatusBar>
      </AppWindow>

      <TaskBar aria-label="Task bar">
        <TaskBarInner>
          <TaskButton $width={24} aria-label="Player">
            <svg width="24" height="24" viewBox="0 0 24 24"><path d="M0 0l5 17H0z" fill="#f58220" /><path d="M0 5l2 0 1 5H0z" fill="#fff" /></svg>
          </TaskButton>
          {tasks.map(([name, icon], i) => <TaskButton key={name} $active={i === 0} aria-label={name}>{icon}</TaskButton>)}
          <Tray>
            {tray.map(([name, icon]) => <TaskButton key={name} $width={24} aria-label={name}>{icon}</TaskButton>)}
            <TaskButton $width={36}>РУС</TaskButton>
            <Clock>11:26 PM</Clock>
            <TaskButton $width={24} aria-label="Notifications"><Mini><path d="M3 .5h13v12H3z" /></Mini></TaskButton>
          </Tray>
        </TaskBarInner>
      </TaskBar>
    </Screen>
  );
}
